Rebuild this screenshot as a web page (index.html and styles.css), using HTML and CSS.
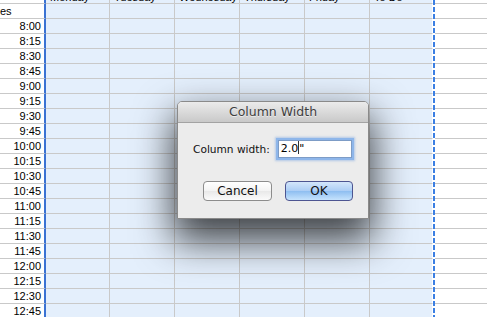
FILE: index.html
```html
<!DOCTYPE html>
<html>
<head>
<meta charset="utf-8">
<link rel="stylesheet" href="styles.css">
</head>
<body>
<div class="sheet">
  <div class="t"></div><div class="d h">Monday</div><div class="d h">Tuesday</div><div class="d h">Wednesday</div><div class="d h">Thursday</div><div class="d h">Friday</div><div class="d x h">To Do</div><div class="r"></div>
  <div class="t es">es</div><div class="d"></div><div class="d"></div><div class="d"></div><div class="d"></div><div class="d"></div><div class="d x"></div><div class="r"></div>
  <div class="t">8:00</div><div class="d"></div><div class="d"></div><div class="d"></div><div class="d"></div><div class="d"></div><div class="d x"></div><div class="r"></div>
  <div class="t">8:15</div><div class="d"></div><div class="d"></div><div class="d"></div><div class="d"></div><div class="d"></div><div class="d x"></div><div class="r"></div>
  <div class="t">8:30</div><div class="d"></div><div class="d"></div><div class="d"></div><div class="d"></div><div class="d"></div><div class="d x"></div><div class="r"></div>
  <div class="t">8:45</div><div class="d"></div><div class="d"></div><div class="d"></div><div class="d"></div><div class="d"></div><div class="d x"></div><div class="r"></div>
  <div class="t">9:00</div><div class="d"></div><div class="d"></div><div class="d"></div><div class="d"></div><div class="d"></div><div class="d x"></div><div class="r"></div>
  <div class="t">9:15</div><div class="d"></div><div class="d"></div><div class="d"></div><div class="d"></div><div class="d"></div><div class="d x"></div><div class="r"></div>
  <div class="t">9:30</div><div class="d"></div><div class="d"></div><div class="d"></div><div class="d"></div><div class="d"></div><div class="d x"></div><div class="r"></div>
  <div class="t">9:45</div><div class="d"></div><div class="d"></div><div class="d"></div><div class="d"></div><div class="d"></div><div class="d x"></div><div class="r"></div>
  <div class="t">10:00</div><div class="d"></div><div class="d"></div><div class="d"></div><div class="d"></div><div class="d"></div><div class="d x"></div><div class="r"></div>
  <div class="t">10:15</div><div class="d"></div><div class="d"></div><div class="d"></div><div class="d"></div><div class="d"></div><div class="d x"></div><div class="r"></div>
  <div class="t">10:30</div><div class="d"></div><div class="d"></div><div class="d"></div><div class="d"></div><div class="d"></div><div class="d x"></div><div class="r"></div>
  <div class="t">10:45</div><div class="d"></div><div class="d"></div><div class="d"></div><div class="d"></div><div class="d"></div><div class="d x"></div><div class="r"></div>
  <div class="t">11:00</div><div class="d"></div><div class="d"></div><div class="d"></div><div class="d"></div><div class="d"></div><div class="d x"></div><div class="r"></div>
  <div class="t">11:15</div><div class="d"></div><div class="d"></div><div class="d"></div><div class="d"></div><div class="d"></div><div class="d x"></div><div class="r"></div>
  <div class="t">11:30</div><div class="d"></div><div class="d"></div><div class="d"></div><div class="d"></div><div class="d"></div><div class="d x"></div><div class="r"></div>
  <div class="t">11:45</div><div class="d"></div><div class="d"></div><div class="d"></div><div class="d"></div><div class="d"></div><div class="d x"></div><div class="r"></div>
  <div class="t">12:00</div><div class="d"></div><div class="d"></div><div class="d"></div><div class="d"></div><div class="d"></div><div class="d x"></div><div class="r"></div>
  <div class="t">12:15</div><div class="d"></div><div class="d"></div><div class="d"></div><div class="d"></div><div class="d"></div><div class="d x"></div><div class="r"></div>
  <div class="t">12:30</div><div class="d"></div><div class="d"></div><div class="d"></div><div class="d"></div><div class="d"></div><div class="d x"></div><div class="r"></div>
  <div class="t">12:45</div><div class="d"></div><div class="d"></div><div class="d"></div><div class="d"></div><div class="d"></div><div class="d x"></div><div class="r"></div>
</div>
<div class="marquee"></div>
<div class="dlg">
  <div class="title">Column Width</div>
  <div class="body">
    <div class="row">
      <span class="label">Column width:</span>
      <div class="field">2.0<span class="caret"></span>"</div>
    </div>
    <div class="btns">
      <div class="btn">Cancel</div>
      <div class="btn ok">OK</div>
    </div>
  </div>
</div>
</body>
</html>
```

FILE: styles.css
```css
html, body {
  margin: 0;
  padding: 0;
}
body {
  width: 487px;
  height: 317px;
  overflow: hidden;
  position: relative;
  background: #fff;
  font-family: "Liberation Sans", Arial, sans-serif;
  font-size: 11px;
  color: #000;
}
.sheet {
  display: grid;
  grid-template-columns: 46px 64px 65px 65px 65px 65px 63px 1fr;
  grid-auto-rows: 15px;
  margin-top: -11px;
}
.sheet > div {
  box-sizing: border-box;
  border-bottom: 1px solid #c9c9c9;
  line-height: 14px;
  white-space: nowrap;
  overflow: hidden;
}
.t {
  background: #fff;
  border-right: 2px solid #3a72d3;
  text-align: right;
  padding-right: 3px;
}
.t.es {
  text-align: left;
  padding: 0;
}
.d {
  background: #e4effc;
  border-right: 1px solid #c9c9c9;
}
.d.x {
  border-right-color: #fff;
}
.h {
  padding: 1px 0 0 4px;
}
.r {
  background: #fff;
}
.marquee {
  position: absolute;
  left: 433px;
  top: 0;
  width: 2px;
  height: 317px;
  background: repeating-linear-gradient(to bottom, #3b7fe3 0 5px, #fff 5px 7px);
}
.dlg {
  position: absolute;
  left: 177px;
  top: 101px;
  width: 192px;
  height: 118px;
  box-sizing: border-box;
  border: 1px solid #8a8a8a;
  border-radius: 5px 5px 0 0;
  background: #ececec;
  box-shadow: 0 18px 38px 4px rgba(0, 0, 0, 0.72);
  font-family: "DejaVu Sans", sans-serif;
  display: flex;
  flex-direction: column;
}
.title {
  height: 20px;
  line-height: 20px;
  border-bottom: 1px solid #a3a3a3;
  border-radius: 4px 4px 0 0;
  background: linear-gradient(#ebebeb, #c9c9c9);
  text-align: center;
  font-size: 12.5px;
  color: #3e3e3e;
  text-shadow: 0 1px 0 rgba(255, 255, 255, 0.6);
}
.body {
  flex: 1;
  padding: 15px 15px 0 15px;
}
.row {
  display: flex;
  align-items: center;
  height: 22px;
}
.label {
  font-size: 10.6px;
  color: #111;
}
.field {
  margin-left: 8px;
  width: 74px;
  height: 18px;
  box-sizing: border-box;
  border: 1px solid #7d9cc6;
  box-shadow: 0 0 0 2px #8eb6ea, 0 0 2px 3px rgba(120, 165, 225, 0.5);
  background: #fff;
  font-size: 11px;
  line-height: 16px;
  padding-left: 2px;
  color: #000;
}
.caret {
  display: inline-block;
  width: 1px;
  height: 13px;
  background: #333;
  vertical-align: -2px;
}
.btns {
  display: flex;
  justify-content: flex-end;
  gap: 13px;
  margin-top: 21px;
}
.btn {
  width: 69px;
  height: 20px;
  box-sizing: border-box;
  border: 1px solid #8c8c8c;
  border-radius: 4px;
  background: linear-gradient(#ffffff, #f3f3f3 50%, #e8e8e8 50%, #fbfbfb);
  text-align: center;
  font-size: 12px;
  line-height: 18px;
  color: #111;
}
.btn.ok {
  width: 68px;
  border-color: #4d5591;
  background: linear-gradient(#d4e6fb, #abcdf5 50%, #8dbdf0 50%, #c6e3fd);
}
```
